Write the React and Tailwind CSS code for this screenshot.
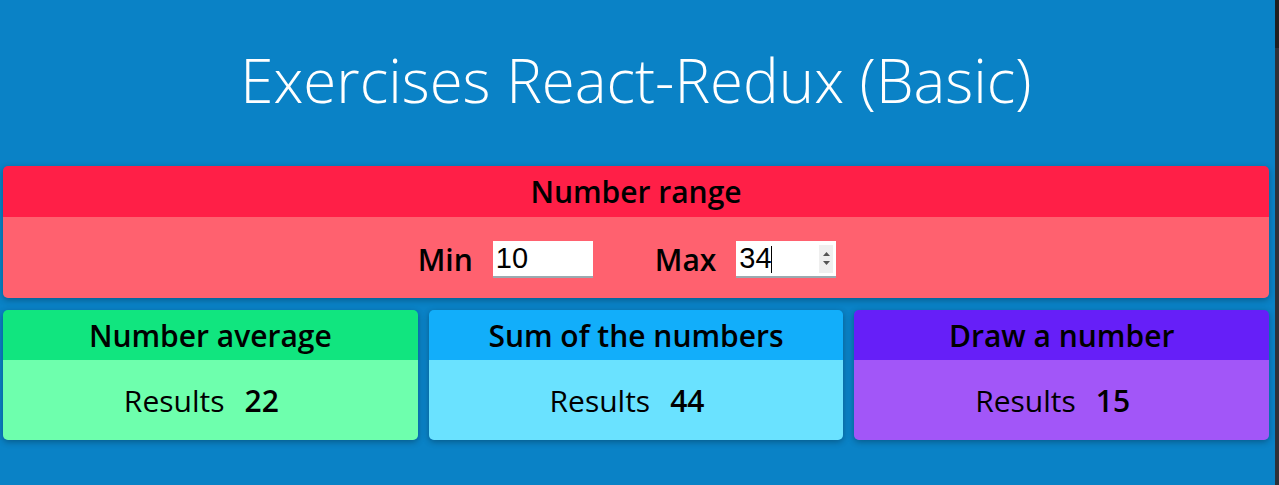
import React, { useState } from 'react'

const font = { fontFamily: '"Open Sans", "Noto Sans", sans-serif' }

const ResultCard = ({ title, value, head, body }) => (
  <div className="flex-1 rounded-[5px] overflow-hidden shadow-[0_2px_6px_rgba(0,0,0,0.3)]">
    <div className={`h-[50px] flex items-center justify-center text-[30px] font-semibold text-black ${head}`}>
      {title}
    </div>
    <div className={`h-[80px] pr-[18px] flex items-center justify-center gap-[20px] text-[30px] text-black ${body}`}>
      <span>Results</span>
      <span className="font-semibold">{value}</span>
    </div>
  </div>
)

const NumberInput = ({ value, onChange, focused }) => (
  <div className="relative w-[100px] h-[37px] bg-white border-b-[2px] border-[#9aaab0] font-normal">
    <input
      type="text"
      value={value}
      onChange={(e) => onChange(e.target.value)}
      className="block w-full h-full p-0 pl-[3px] bg-transparent text-[29px] leading-[35px] text-black outline-none"
      style={{ fontFamily: '"Liberation Sans", Arial, sans-serif' }}
    />
    {focused && (
      <>
        <span className="pointer-events-none absolute left-[35px] top-[5px] w-px h-[27px] bg-black" />
        <div className="pointer-events-none absolute right-[3px] top-[4px] w-[14px] h-[28px] bg-[#efefef] flex flex-col items-center justify-center gap-[5px]">
          <svg width="7" height="4" viewBox="0 0 7 4"><path d="M0 4L3.5 0L7 4Z" fill="#555" /></svg>
          <svg width="7" height="4" viewBox="0 0 7 4"><path d="M0 0L3.5 4L7 0Z" fill="#555" /></svg>
        </div>
      </>
    )}
  </div>
)

export default function App() {
  const [min, setMin] = useState('10')
  const [max, setMax] = useState('34')

  return (
    <div className="w-[1279px] h-[485px] flex bg-[#0a82c6] overflow-hidden" style={font}>
      <div className="flex-1 flex flex-col pl-[3px] pr-[6px]">
        <h1 className="pt-[44px] h-[166px] text-center text-[60px] font-light leading-[72px] text-white">
          Exercises React-Redux (Basic)
        </h1>

        <div className="rounded-[5px] overflow-hidden shadow-[0_2px_6px_rgba(0,0,0,0.3)]">
          <div className="h-[51px] flex items-center justify-center bg-[#ff1f47] text-[30px] font-semibold text-black">
            Number range
          </div>
          <div className="h-[81px] pt-[3px] pr-[18px] flex items-center justify-center bg-[#ff616f] text-[30px] font-semibold text-black">
            <div className="flex items-center gap-[20px]">
              <span>Min</span>
              <NumberInput value={min} onChange={setMin} />
            </div>
            <div className="flex items-center gap-[20px] ml-[62px]">
              <span>Max</span>
              <NumberInput value={max} onChange={setMax} focused />
            </div>
          </div>
        </div>

        <div className="flex gap-[11px] mt-[12px]">
          <ResultCard title="Number average" value="22" head="bg-[#11e57f]" body="bg-[#6effad]" />
          <ResultCard title="Sum of the numbers" value="44" head="bg-[#12aefa]" body="bg-[#6ae2ff]" />
          <ResultCard title="Draw a number" value="15" head="bg-[#661ff8]" body="bg-[#a256f8]" />
        </div>
      </div>
      <div className="w-[4px] h-full bg-[#2d3139]">
        <div className="h-[48px] bg-[#1e1f22]" />
      </div>
    </div>
  )
}
